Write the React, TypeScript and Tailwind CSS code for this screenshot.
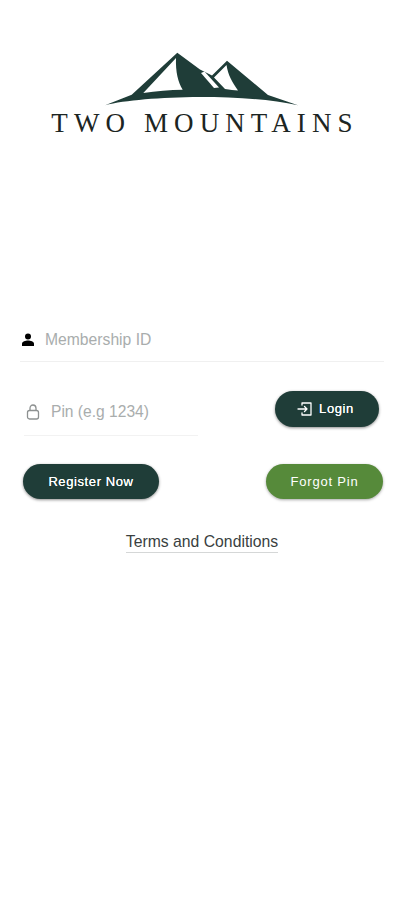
import React from "react";

const sans = "font-['Liberation_Sans',Arial,sans-serif]";

// viewBox uses page coordinates so the shape is easy to compare with the screenshot
const Logo = () => (
  <svg viewBox="103 52 200 56" className="block w-[200px] h-[56px] ml-[103px]">
    <path
      fill="#1f3d38"
      d="M177.3 52.7 L131.7 94.7 L105 105.3 C125 100 160 97.5 200 97 C235 97 270 99 298 105.3 L268 95 L227 60.7 L212 75.5 L200 69.5 Z"
    />
    <path
      fill="#ffffff"
      d="M176 58 L143.3 93 C156 91 170 90 182.7 89.7 C178 82 175.5 72 176 58 Z"
    />
    <path fill="#ffffff" d="M201 73 L204.5 71.5 L219 87.5 L214 88 Z" />
    <path
      fill="#ffffff"
      d="M226.5 65 L214 77.5 L225 89 C230 90 234 90 238 90.5 C232 82 228 75 226.5 65 Z"
    />
  </svg>
);

const App: React.FC = () => {
  return (
    <div className={`w-[404px] h-[900px] bg-white overflow-hidden ${sans}`}>
      <div className="pt-[52px]">
        <Logo />
        <div className="mt-[2px] pl-[6px] text-center text-[27px] leading-[27px] text-[#1c2523] tracking-[6.1px] font-['Liberation_Serif',serif] whitespace-nowrap">
          TWO MOUNTAINS
        </div>
      </div>

      <div className="mt-[189px] ml-[20px] mr-[20px] flex items-center h-[36px] border-b border-[#f0f0f0] pb-[8px]">
        <svg viewBox="0 0 14 14" className="w-[14px] h-[14px] ml-[1px] text-black" fill="currentColor">
          <circle cx="7" cy="3.6" r="3" />
          <path d="M1 13 V10.8 C1 8.8 4.5 7.6 7 7.6 C9.5 7.6 13 8.8 13 10.8 V13 Z" />
        </svg>
        <span className="ml-[10px] text-[15.7px] text-[#a9adad]">Membership ID</span>
      </div>

      <div className="mt-[20px] ml-[24px] mr-[25px] flex items-start">
        <div className="w-[174px] h-[54px] border-b border-[#f2f2f2] flex items-center pt-[6px]">
          <svg viewBox="0 0 14 16" className="w-[14px] h-[16px] ml-[2px] text-[#8d9191]" fill="none" stroke="currentColor" strokeWidth="1.3">
            <rect x="1.5" y="6.5" width="11" height="8.5" rx="2" />
            <path d="M4 6.5 V4.2 C4 2.4 5.3 1 7 1 C8.7 1 10 2.4 10 4.2 V6.5" />
          </svg>
          <span className="ml-[11px] text-[15.6px] text-[#a9adad]">Pin (e.g 1234)</span>
        </div>
        <button className="mt-[9px] ml-auto w-[104px] h-[36px] pr-[3px] rounded-full bg-[#1f3d38] shadow-[0_1px_3px_rgba(0,0,0,0.45)] flex items-center justify-center text-white text-[13px] tracking-[0.6px] [text-shadow:0_0_0.6px_white]">
          <svg viewBox="0 0 16 16" className="w-[16px] h-[16px] mr-[6px]" fill="none" stroke="currentColor" strokeWidth="1.3" strokeLinecap="round" strokeLinejoin="round">
            <path d="M5 4 V2 H14 V14 H5 V12" />
            <path d="M1 8 H10 M7.5 5.5 L10 8 L7.5 10.5" />
          </svg>
          Login
        </button>
      </div>

      <div className="mt-[28px] ml-[23px] mr-[21px] flex justify-between">
        <button className="w-[136px] h-[35px] rounded-full bg-[#1f3d38] shadow-[0_1px_3px_rgba(0,0,0,0.45)] text-white text-[13px] tracking-[0.6px] [text-shadow:0_0_0.6px_white]">
          Register Now
        </button>
        <button className="w-[117px] h-[35px] rounded-full bg-[#568a3a] shadow-[0_1px_3px_rgba(0,0,0,0.35)] text-white text-[13px] tracking-[0.8px]">
          Forgot Pin
        </button>
      </div>

      <div className="mt-[34px] flex justify-center">
        <span className="text-[15.75px] leading-[18px] text-[#3a3f3f] border-b border-[#d5d7d7] pb-px">
          Terms and Conditions
        </span>
      </div>
    </div>
  );
};

export default App;
